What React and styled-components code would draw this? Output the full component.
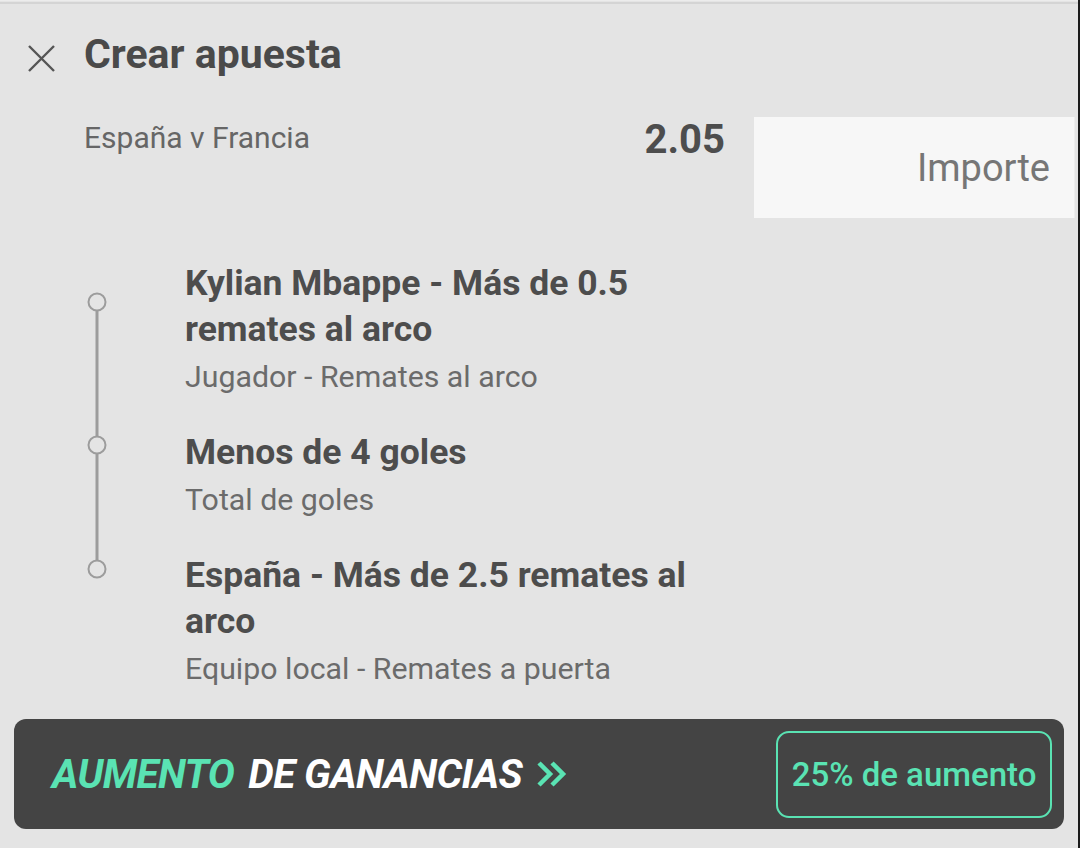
import React from "react";
import styled, { createGlobalStyle } from "styled-components";

const Global = createGlobalStyle`
  html, body { margin: 0; padding: 0; background: #e4e4e4; }
  body { font-family: Roboto, "Noto Sans", "Liberation Sans", sans-serif; }
`;

const Page = styled.div`
  width: 1080px;
  height: 848px;
  box-sizing: border-box;
  background: #e4e4e4;
  border-right: 2px solid #1a1a1a;
  display: flex;
  flex-direction: column;
  overflow: hidden;
`;

const TopEdge = styled.div`
  height: 4px;
  box-sizing: border-box;
  border-top: 1px solid #ececec;
  border-bottom: 2px solid #d4d4d4;
`;

const Header = styled.div`
  height: 100px;
  display: flex;
  align-items: center;
  gap: 29px;
  padding-left: 28px;
`;

const CloseButton = styled.button`
  width: 27px;
  height: 27px;
  padding: 0;
  border: 0;
  background: none;
  display: flex;
  margin-top: 8px;
`;

const Title = styled.h1`
  margin: 0;
  font-size: 41px;
  line-height: 1;
  font-weight: 700;
  color: #4a4a4a;
`;

const MatchRow = styled.div`
  margin-top: 13px;
  height: 101px;
  display: flex;
  align-items: flex-start;
  padding-left: 84px;
`;

const MatchName = styled.div`
  padding-top: 6px;
  font-size: 30px;
  line-height: 1;
  color: #666;
`;

const Odds = styled.div`
  margin-left: auto;
  margin-right: 29px;
  padding-top: 3px;
  font-size: 40px;
  line-height: 1;
  font-weight: 700;
  color: #4d4d4d;
`;

const AmountBox = styled.div`
  width: 321px;
  height: 101px;
  box-sizing: border-box;
  background: #f7f7f7;
  border-right: 1px solid #ededed;
  display: flex;
  align-items: center;
  justify-content: flex-end;
  padding-right: 24px;
  font-size: 38px;
  color: #767676;
  margin-right: 3px;
`;

const List = styled.div`
  display: flex;
  padding-top: 42px;
`;

const Timeline = styled.svg`
  width: 30px;
  margin-left: 82px;
  margin-right: 73px;
  flex: none;
  overflow: visible;
`;

const Items = styled.div`
  display: flex;
  flex-direction: column;
  gap: 32px;
  width: 540px;
`;

const Item = styled.div`
  display: flex;
  flex-direction: column;
`;

const ItemTitle = styled.div`
  font-size: 35.5px;
  line-height: 46px;
  font-weight: 700;
  color: #4d4d4d;
`;

const ItemSub = styled.div`
  margin-top: 5px;
  font-size: 30.3px;
  line-height: 40px;
  color: #6b6b6b;
`;

const Banner = styled.div`
  margin: 29px 14px 0 14px;
  height: 110px;
  box-sizing: border-box;
  border-radius: 12px;
  background: #444444;
  display: flex;
  align-items: center;
  padding: 0 12px 0 38px;
`;

const BannerText = styled.div`
  display: flex;
  align-items: center;
  font-size: 40.5px;
  font-style: italic;
  font-weight: 700;
  letter-spacing: -0.6px;
  gap: 14px;
`;

const Word = styled.span`
  color: ${(p) => (p.$accent ? "#5ae3b3" : "#ffffff")};
`;

const Badge = styled.div`
  margin-left: auto;
  width: 276px;
  height: 87px;
  box-sizing: border-box;
  border: 2px solid #5ae3b3;
  border-radius: 13px;
  display: flex;
  align-items: center;
  justify-content: center;
  font-size: 33px;
  font-weight: 500;
  color: #5ae3b3;
`;

const selections = [
  { title: "Kylian Mbappe - Más de 0.5 remates al arco", sub: "Jugador - Remates al arco" },
  { title: "Menos de 4 goles", sub: "Total de goles" },
  { title: "España - Más de 2.5 remates al arco", sub: "Equipo local - Remates a puerta" },
];

const markers = [42, 185, 309];

export default function App() {
  return (
    <>
      <Global />
      <Page>
        <TopEdge />
        <Header>
          <CloseButton aria-label="Cerrar">
            <svg width="27" height="27" viewBox="0 0 27 27">
              <path d="M1 1 L26 26 M26 1 L1 26" stroke="#555" strokeWidth="2.4" fill="none" />
            </svg>
          </CloseButton>
          <Title>Crear apuesta</Title>
        </Header>
        <MatchRow>
          <MatchName>España v Francia</MatchName>
          <Odds>2.05</Odds>
          <AmountBox>Importe</AmountBox>
        </MatchRow>
        <List>
          <Timeline height="430" viewBox="0 0 30 430">
            <line x1="15" y1={markers[0] + 9} x2="15" y2={markers[1] - 9} stroke="#9c9c9c" strokeWidth="3" />
            <line x1="15" y1={markers[1] + 9} x2="15" y2={markers[2] - 9} stroke="#9c9c9c" strokeWidth="3" />
            {markers.map((y) => (
              <circle key={y} cx="15" cy={y} r="8.5" fill="none" stroke="#9c9c9c" strokeWidth="2" />
            ))}
          </Timeline>
          <Items>
            {selections.map((s) => (
              <Item key={s.title}>
                <ItemTitle>{s.title}</ItemTitle>
                <ItemSub>{s.sub}</ItemSub>
              </Item>
            ))}
          </Items>
        </List>
        <Banner>
          <BannerText>
            <Word $accent>AUMENTO</Word>
            <Word>DE GANANCIAS</Word>
            <svg width="32" height="28" viewBox="0 0 32 28">
              <path d="M3 3 L14 14 L3 25 M16 3 L27 14 L16 25" stroke="#5ae3b3" strokeWidth="4.5" fill="none" />
            </svg>
          </BannerText>
          <Badge>25% de aumento</Badge>
        </Banner>
      </Page>
    </>
  );
}
